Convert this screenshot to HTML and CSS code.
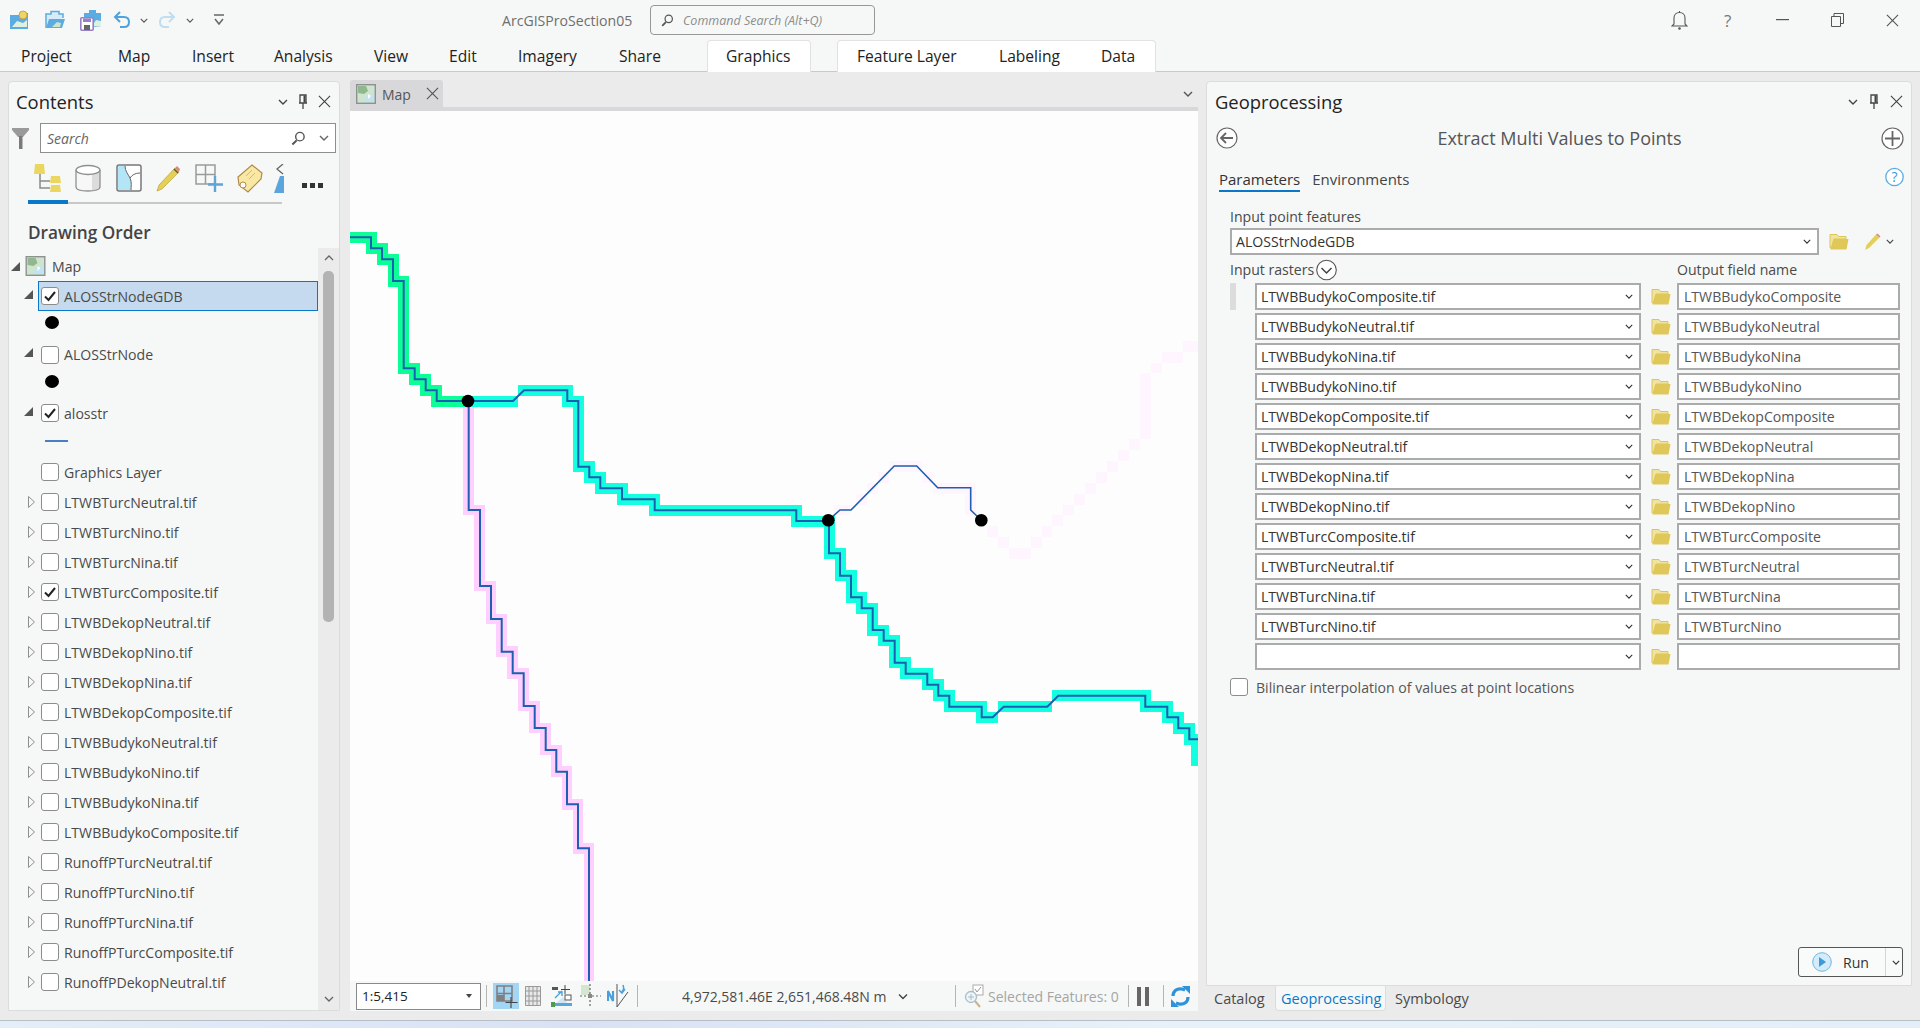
FILE: index.html
```html
<!DOCTYPE html>
<html lang="en">
<head>
  <meta charset="UTF-8" />
  <title>ArcGISProSection05</title>
  <link rel="stylesheet" href="styles.css">
</head>
<body>

  <svg class="defs" width="0" height="0">
    <symbol id="chev" viewBox="0 0 10 6"><path d="M1 1l4 4 4-4" fill="none" stroke="currentColor" stroke-width="1.4"/></symbol>
    <symbol id="closex" viewBox="0 0 14 14"><path d="M1 1l12 12M13 1L1 13" fill="none" stroke="currentColor" stroke-width="1.2"/></symbol>
    <symbol id="pin" viewBox="0 0 10 16"><path d="M2 1h6v8H2zM1 9h8M5 9v6" fill="none" stroke="currentColor" stroke-width="1.3"/><path d="M5.5 1.5h2v7h-2z" fill="currentColor"/></symbol>
    <symbol id="folder" viewBox="0 0 20 17"><path d="M1 3V1.5h7L9.5 3.5H17V6H5L2.5 15 1 15z" fill="#f1e3a0" stroke="#dcc659" stroke-width="1"/><path d="M4.5 6H19.5L17.5 16.5H1.500z" fill="#dfc859"/></symbol>
    <symbol id="check" viewBox="0 0 14 14"><path d="M2 7.5l3.500 3.500L12 3" fill="none" stroke="#222" stroke-width="2"/></symbol>
    <symbol id="tri-open" viewBox="0 0 9 9"><path d="M9 0v9H0z" fill="#555"/></symbol>
    <symbol id="tri-closed" viewBox="0 0 7 12"><path d="M.5.5l6 5.500-6 5.500z" fill="#f6f8f7" stroke="#8f8f8f"/></symbol>
    <symbol id="mapicon" viewBox="0 0 20 20"><rect x=".7" y=".7" width="18.6" height="18.6" fill="#cfe4cf" stroke="#8d9291" stroke-width="1.4"/><path d="M2 2h8l2 5-4 3-6-1z" fill="#8fb98d"/><path d="M18 9l-4 3-5 2-1 4h10z" fill="#bfe3f5"/><path d="M12 10l3 2-3 3z" fill="#fff"/></symbol>
    <symbol id="search" viewBox="0 0 16 16"><circle cx="9.5" cy="6" r="4.5" fill="none" stroke="#555" stroke-width="1.5"/><path d="M6 10l-4.5 4.5" stroke="#555" stroke-width="2.2"/></symbol>
  </svg>

  <header class="appbar">
    <div class="titlerow">
      <div class="qat">
        <svg width="20" height="20" viewBox="0 0 20 20"><path d="M0 5h10v-2h8v16H0z" fill="#5aace2"/><path d="M2 17l5-6 6 2 4-3v7z" fill="#dff0e0"/><circle cx="13" cy="5" r="4" fill="#efd469" stroke="#c9a83c"/></svg>
        <svg width="20" height="20" viewBox="0 0 20 20"><path d="M1 18V4h5V1.500h8V4h4v4" fill="#d7ecf8" stroke="#5aace2" stroke-width="1.5"/><path d="M4 9h16l-3 9H1z" fill="#5aace2"/><path d="M7 17l5-5 4 1-1 4z" fill="#cfe4c8"/></svg>
        <svg width="21" height="22" viewBox="0 0 21 22"><path d="M4 4h5V1h7v3h5v14H4z" fill="#5aace2"/><path d="M12 17l4-6 5 1v6z" fill="#dff0e0"/><rect x=".8" y="8.8" width="12.4" height="12.4" rx="1" fill="#fff" stroke="#9a80c4" stroke-width="1.6"/><rect x="3" y="9.5" width="8" height="3.5" fill="#9a80c4"/><rect x="4" y="16" width="6" height="5" fill="#666"/></svg>
        <svg width="18" height="18" viewBox="0 0 18 18"><path d="M7 1L2 6l5 5M2 6h9c3 0 5 2 5 5s-2 5-5 5H7" fill="none" stroke="#4ea3dc" stroke-width="2"/></svg>
        <svg class="tiny" width="8" height="5"><use href="#chev"/></svg>
        <svg width="18" height="18" viewBox="0 0 18 18"><path d="M11 1l5 5-5 5M16 6H7c-3 0-5 2-5 5s2 5 5 5h4" fill="none" stroke="#c0def2" stroke-width="2"/></svg>
        <svg class="tiny" width="8" height="5"><use href="#chev"/></svg>
        <svg width="10" height="12" viewBox="0 0 10 12"><path d="M0 1h10M1 5l4 5 4-5" fill="none" stroke="#666" stroke-width="1.5"/></svg>
      </div>
      <div class="doc-title">ArcGISProSection05</div>
      <div class="cmd-search">
        <svg width="13" height="13"><use href="#search"/></svg>
        <span>Command Search (Alt+Q)</span>
      </div>
      <div class="win-btns">
        <svg width="17" height="20" viewBox="0 0 17 20"><path d="M3 14V8c0-3 2-5.500 5.500-5.500S14 5 14 8v6l2 2H1zM8.500 1v1.500" fill="none" stroke="#555" stroke-width="1.1"/><circle cx="8.5" cy="18.5" r="1.3" fill="#555"/></svg>
        <span class="help">?</span>
        <svg width="13" height="2"><rect width="13" height="1.2" fill="#555"/></svg>
        <svg width="13" height="14" viewBox="0 0 13 14"><path d="M.5 3.500h9v10h-9zM3 3.500V.5h9.500v10H9.500" fill="none" stroke="#555"/></svg>
        <svg width="13" height="13" class="win-x"><use href="#closex"/></svg>
      </div>
    </div>
    <nav class="ribbon">
      <span class="rtab rtab-first">Project</span>
      <span class="rtab">Map</span>
      <span class="rtab">Insert</span>
      <span class="rtab">Analysis</span>
      <span class="rtab">View</span>
      <span class="rtab">Edit</span>
      <span class="rtab">Imagery</span>
      <span class="rtab">Share</span>
      <div class="ctx ctx-graphics"><span>Graphics</span></div>
      <div class="ctx ctx-layer"><span>Feature Layer</span><span>Labeling</span><span>Data</span></div>
    </nav>
  </header>

  <main class="workspace">

    <section class="contents">
      <div class="pane-head">
        <h2>Contents</h2>
        <div class="pane-tools">
          <svg width="10" height="6"><use href="#chev"/></svg>
          <svg width="10" height="16"><use href="#pin"/></svg>
          <svg width="13" height="13"><use href="#closex"/></svg>
        </div>
      </div>
      <div class="search-row">
        <svg width="17" height="21" viewBox="0 0 17 21"><path d="M0 0h17v2L11 9v0H6L0 2z" fill="#9a9a9a"/><rect x="7" y="8" width="3.5" height="13" fill="#7a7a7a"/></svg>
        <div class="search-box">
          <span>Search</span>
          <svg width="15" height="15"><use href="#search"/></svg>
          <svg class="search-chev" width="10" height="6"><use href="#chev"/></svg>
        </div>
      </div>
      <div class="view-icons">
        <svg width="28" height="28" viewBox="0 0 28 28"><path d="M6 10v14h10M6 17h10" fill="none" stroke="#8a8a8a" stroke-width="1.5"/><path d="M1 0h9l1 10H0z" fill="#ecd662"/><path d="M17 12h9l1 7H16zM17 21h9l1 7H16z" fill="#ecd662"/></svg>
        <svg width="26" height="28" viewBox="0 0 26 28"><path d="M17 5h8v18c0 2-4 4-8 4z" fill="#dcdcdc"/><ellipse cx="13" cy="6" rx="12" ry="4.5" fill="#fff" stroke="#8f8f8f" stroke-width="1.3"/><path d="M1 6v17c0 2.500 5 4 12 4s12-1.500 12-4V6" fill="none" stroke="#8f8f8f" stroke-width="1.3"/></svg>
        <svg width="26" height="28" viewBox="0 0 26 28"><rect x="1" y="1" width="24" height="26" rx="2" fill="#fff" stroke="#777" stroke-width="1.5"/><path d="M2 2h7c0 5 3 8 5 12s1 9 1 12H2z" fill="#b3e5f7"/><path d="M9 2c0 5 3 8 5 12s1 9 1 12M14 14c2-3 5-5 10-5" fill="none" stroke="#666" stroke-width="1"/></svg>
        <svg width="26" height="28" viewBox="0 0 26 28"><path d="M1 27l2-6L19 4l4 4L6 25z" fill="#e6cf55" stroke="#b9a23c" stroke-width=".7"/><path d="M19 4l2-2 3 3-1 3z" fill="#d98a7a"/><path d="M18 5l4 4" stroke="#555" stroke-width="1.5"/></svg>
        <svg width="28" height="28" viewBox="0 0 28 28"><path d="M1 1h19v19H1zM10.500 1v19M1 10.500h19" fill="none" stroke="#9a9a9a" stroke-width="1.5"/><path d="M20 12v16M13 20.500h15" stroke="#5fa4d4" stroke-width="2.4"/></svg>
        <svg width="27" height="30" viewBox="0 0 27 30"><path d="M16 1l10 8-1 6-13 13-9-7-1-8z" fill="#f8e8a4" stroke="#b08a4a" stroke-width="1.2"/><circle cx="7" cy="21" r="3" fill="#fff" stroke="#b08a4a"/><path d="M10 12l6-6M13 15l6-6" stroke="#d6bd5c"/></svg>
        <svg class="view-cut" width="10" height="29" viewBox="0 0 10 29"><path d="M9 0L3 5l6 5" fill="none" stroke="#666" stroke-width="1.3"/><path d="M6 12h4v17H0z" fill="#5aa6dc"/></svg>
        <span class="more"><i></i><i></i><i></i></span>
      </div>
      <div class="view-rule"><span></span></div>
      <h3>Drawing Order</h3>
      <div class="tree-wrap">
        <div class="tree">
          <div class="layer layer-root">
            <svg width="9" height="9"><use href="#tri-open"/></svg>
            <svg class="root-icon" width="21" height="20"><use href="#mapicon"/></svg>
            <span>Map</span>
          </div>
          <div class="layer">
            <div class="tw tw-open"><svg width="9" height="9"><use href="#tri-open"/></svg></div>
            <div class="lbody lbody-sel"><span class="cb"><svg width="14" height="14"><use href="#check"/></svg></span><span>ALOSStrNodeGDB</span></div>
          </div>
          <div class="sym"><i class="dot"></i></div>
          <div class="layer">
            <div class="tw tw-open"><svg width="9" height="9"><use href="#tri-open"/></svg></div>
            <div class="lbody"><span class="cb"></span><span>ALOSStrNode</span></div>
          </div>
          <div class="sym"><i class="dot"></i></div>
          <div class="layer">
            <div class="tw tw-open"><svg width="9" height="9"><use href="#tri-open"/></svg></div>
            <div class="lbody"><span class="cb"><svg width="14" height="14"><use href="#check"/></svg></span><span>alosstr</span></div>
          </div>
          <div class="sym sym-line"><i class="stroke"></i></div>
          <div class="layer">
            <div class="tw"></div>
            <div class="lbody"><span class="cb"></span><span>Graphics Layer</span></div>
          </div>
          <div class="layer"><div class="tw"><svg width="7" height="12"><use href="#tri-closed"/></svg></div><div class="lbody"><span class="cb"></span><span>LTWBTurcNeutral.tif</span></div></div>
          <div class="layer"><div class="tw"><svg width="7" height="12"><use href="#tri-closed"/></svg></div><div class="lbody"><span class="cb"></span><span>LTWBTurcNino.tif</span></div></div>
          <div class="layer"><div class="tw"><svg width="7" height="12"><use href="#tri-closed"/></svg></div><div class="lbody"><span class="cb"></span><span>LTWBTurcNina.tif</span></div></div>
          <div class="layer"><div class="tw"><svg width="7" height="12"><use href="#tri-closed"/></svg></div><div class="lbody"><span class="cb"><svg width="14" height="14"><use href="#check"/></svg></span><span>LTWBTurcComposite.tif</span></div></div>
          <div class="layer"><div class="tw"><svg width="7" height="12"><use href="#tri-closed"/></svg></div><div class="lbody"><span class="cb"></span><span>LTWBDekopNeutral.tif</span></div></div>
          <div class="layer"><div class="tw"><svg width="7" height="12"><use href="#tri-closed"/></svg></div><div class="lbody"><span class="cb"></span><span>LTWBDekopNino.tif</span></div></div>
          <div class="layer"><div class="tw"><svg width="7" height="12"><use href="#tri-closed"/></svg></div><div class="lbody"><span class="cb"></span><span>LTWBDekopNina.tif</span></div></div>
          <div class="layer"><div class="tw"><svg width="7" height="12"><use href="#tri-closed"/></svg></div><div class="lbody"><span class="cb"></span><span>LTWBDekopComposite.tif</span></div></div>
          <div class="layer"><div class="tw"><svg width="7" height="12"><use href="#tri-closed"/></svg></div><div class="lbody"><span class="cb"></span><span>LTWBBudykoNeutral.tif</span></div></div>
          <div class="layer"><div class="tw"><svg width="7" height="12"><use href="#tri-closed"/></svg></div><div class="lbody"><span class="cb"></span><span>LTWBBudykoNino.tif</span></div></div>
          <div class="layer"><div class="tw"><svg width="7" height="12"><use href="#tri-closed"/></svg></div><div class="lbody"><span class="cb"></span><span>LTWBBudykoNina.tif</span></div></div>
          <div class="layer"><div class="tw"><svg width="7" height="12"><use href="#tri-closed"/></svg></div><div class="lbody"><span class="cb"></span><span>LTWBBudykoComposite.tif</span></div></div>
          <div class="layer"><div class="tw"><svg width="7" height="12"><use href="#tri-closed"/></svg></div><div class="lbody"><span class="cb"></span><span>RunoffPTurcNeutral.tif</span></div></div>
          <div class="layer"><div class="tw"><svg width="7" height="12"><use href="#tri-closed"/></svg></div><div class="lbody"><span class="cb"></span><span>RunoffPTurcNino.tif</span></div></div>
          <div class="layer"><div class="tw"><svg width="7" height="12"><use href="#tri-closed"/></svg></div><div class="lbody"><span class="cb"></span><span>RunoffPTurcNina.tif</span></div></div>
          <div class="layer"><div class="tw"><svg width="7" height="12"><use href="#tri-closed"/></svg></div><div class="lbody"><span class="cb"></span><span>RunoffPTurcComposite.tif</span></div></div>
          <div class="layer"><div class="tw"><svg width="7" height="12"><use href="#tri-closed"/></svg></div><div class="lbody"><span class="cb"></span><span>RunoffPDekopNeutral.tif</span></div></div>
        </div>
        <div class="scrollbar">
          <svg class="sb-up" width="10" height="6" viewBox="0 0 10 6"><path d="M1 5l4-4 4 4" fill="none" stroke="#666" stroke-width="1.3"/></svg>
          <div class="thumb"></div>
          <svg class="sb-down" width="10" height="6"><use href="#chev"/></svg>
        </div>
      </div>
    </section>

    <section class="mapview">
      <div class="map-tabs">
        <div class="map-tab">
          <svg width="20" height="20"><use href="#mapicon"/></svg>
          <span>Map</span>
          <svg class="map-tab-x" width="13" height="13"><use href="#closex"/></svg>
        </div>
        <svg class="map-tabs-chev" width="10" height="6"><use href="#chev"/></svg>
      </div>
      <div class="map-canvas">
        <!-- coordinates are screen pixels, the viewBox starts at the corner of the map -->
        <svg class="map-svg" width="848" height="870" viewBox="350 111 848 870">
          <g class="faint">
            <rect x="834" y="505" width="16" height="10"/><rect x="856" y="494" width="11" height="11"/><rect x="867" y="483" width="11" height="11"/><rect x="878" y="472" width="11" height="11"/><rect x="889" y="461" width="33" height="11"/><rect x="922" y="472" width="11" height="11"/><rect x="933" y="483" width="43" height="11"/><rect x="965" y="494" width="11" height="21"/>
            <rect x="987" y="526" width="11" height="11"/><rect x="998" y="537" width="11" height="11"/><rect x="1009" y="548" width="22" height="11"/><rect x="1031" y="537" width="11" height="11"/><rect x="1042" y="526" width="10" height="11"/><rect x="1052" y="515" width="11" height="11"/><rect x="1063" y="505" width="11" height="10"/><rect x="1074" y="494" width="11" height="11"/><rect x="1085" y="483" width="11" height="11"/><rect x="1096" y="472" width="11" height="11"/><rect x="1107" y="461" width="11" height="11"/><rect x="1118" y="450" width="11" height="11"/><rect x="1129" y="439" width="11" height="11"/><rect x="1140" y="373" width="11" height="66"/><rect x="1151" y="363" width="11" height="10"/><rect x="1162" y="352" width="21" height="11"/><rect x="1183" y="341" width="15" height="11"/>
          </g>
          <path class="band band-pink" d="M468.7 401V510H479.7V586H491V619H501.7V651.7H512.7V673.3H523.7V706H534.7V728H545.7V750H556.3V771.7H567V804.3H578V848.3H589V981"/>
          <path class="band band-cyan" d="M462 401H518M518 390.3H567.3V401H578.3V466.7H589.3V477.3H600.3V488.3H622V499.3H654.7V510.3H796.3V521H829V553.3H840V575.7H851V597.3H861.7V608.3H872.7V630H883.7V640.7H894.7V662.7H905.7V673.7H927.3V684.7H938.3V695.7H949.3V706.7H981.7V717.3H998M998 706.7H1052M1052 695.7H1145.3V706.7H1167.3V717.3H1178.3V728.3H1189.3V739.3H1196V766"/>
          <path class="band band-green" d="M350 237.3H371V248.3H382V259.3H393V281H403.7V368.3H414.7V379.3H425.7V390.3H436.7V401H464"/>
          <path class="river" d="M350 237.3H371V248.3H382V259.3H393V281H403.7V368.3H414.7V379.3H425.7V390.3H436.7V401H513L524 390.3H567.3V401H578.3V466.7H589.3V477.3H600.3V488.3H622V499.3H654.7V510.3H796.3V521H829V553.3H840V575.7H851V597.3H861.7V608.3H872.7V630H883.7V640.7H894.7V662.7H905.7V673.7H927.3V684.7H938.3V695.7H949.3V706.7H981.7V717.3H992.7L1003.7 706.7H1047.3L1058.3 695.7H1145.3V706.7H1167.3V717.3H1178.3V728.3H1189.3V739.3H1198"/>
          <path class="river" d="M468.7 401V510H480V586H491V619H501.7V651.7H512.7V673.3H523.7V706H534.7V728H545.7V750H556.3V771.7H567V804.3H578V848.3H589V981"/>
          <path class="river river-thin" d="M828.3 520.3L840 510H851L894.3 466H916.7L937.7 487.7H970.7V510L981.3 520.3"/>
          <circle cx="468" cy="401" r="6.3"/>
          <circle cx="828.3" cy="520.3" r="6.3"/>
          <circle cx="981.3" cy="520.3" r="6.3"/>
        </svg>
      </div>
      <div class="statusbar">
        <div class="scale-box"><span>1:5,415</span><i class="caret"></i></div>
        <i class="sdiv sd1"></i>
        <div class="st-btn">
          <svg width="22" height="24" viewBox="0 0 22 24"><path d="M1 2h15v15H1zM8 2v15M1 9.500h15" fill="none" stroke="#808080" stroke-width="1.6"/><rect x="1" y="11" width="7" height="6" fill="#808080"/><path d="M15 13v11M9.500 18.500h12" stroke="#444" stroke-width="1.1"/></svg>
        </div>
        <svg class="st-grid" width="16" height="20" viewBox="0 0 16 20"><path d="M.5.5h15v19H.5zM.5 5h15M.5 10h15M.5 15h15M4 .5v19M8 .5v19M12 .5v19" fill="#e8e8e8" stroke="#999"/></svg>
        <svg class="st-snap" width="21" height="22" viewBox="0 0 21 22"><rect x="1" y="2" width="6" height="3" fill="#555"/><path d="M14 0v9M10 4.500h9" stroke="#444"/><path d="M4 13l7-7M7 7h4v4" fill="none" stroke="#4aa0dc" stroke-width="1.4"/><path d="M4 19l8-7 5 7z" fill="#cfe6f5"/><rect x="14" y="10" width="6" height="5" fill="#fff" stroke="#555"/><rect y="18" width="21" height="3" fill="#5aa6dc"/><rect y="17" width="4" height="5" fill="#4f9a4f"/></svg>
        <svg class="st-guide" width="21" height="24" viewBox="0 0 21 24"><rect x="1" y="1" width="9" height="10" fill="#d4e6d0"/><path d="M10 0v24M0 12h21" stroke="#666" stroke-width="1.2" stroke-dasharray="2 2"/><rect x="8" y="10" width="4" height="4" fill="#888"/></svg>
        <svg class="st-north" width="22" height="24" viewBox="0 0 22 24"><path d="M10 23L21 8M10 0v23" fill="none" stroke="#555"/><path d="M1 17V7l5 10V7" fill="none" stroke="#4aa0dc" stroke-width="2.2"/><path d="M16 1c1 3 1 4-1 7M12 6l3 3 3-4" fill="none" stroke="#4aa0dc" stroke-width="1.5"/></svg>
        <i class="sdiv sd2"></i>
        <span class="coords">4,972,581.46E 2,651,468.48N m</span>
        <svg class="st-chev" width="10" height="7"><use href="#chev"/></svg>
        <i class="sdiv sd3"></i>
        <svg class="st-sel" width="20" height="24" viewBox="0 0 20 24"><rect x="9" y="1" width="10" height="10" fill="#fff" stroke="#aaa"/><path d="M11 5l2 3 4-5" fill="none" stroke="#999"/><circle cx="7" cy="13" r="5.5" fill="#eef5fa" stroke="#a9bcc8" stroke-width="1.3"/><path d="M7 10v6M4 13h6" stroke="#a9bcc8"/><path d="M11 17l5 6" stroke="#c9b48c" stroke-width="2"/></svg>
        <span class="selected">Selected Features: 0</span>
        <i class="sdiv sd4"></i>
        <span class="pause"><i></i><i></i></span>
        <i class="sdiv sd5"></i>
        <svg class="st-refresh" width="19" height="21" viewBox="0 0 19 21"><path d="M2 10C2 5 6 2 11 3l3 1M17 11c0 5-4 8-9 7l-3-1" fill="none" stroke="#2e93d9" stroke-width="3.2"/><path d="M11 0h8v8zM8 21H0v-8z" fill="#2e93d9"/></svg>
      </div>
    </section>

    <section class="gp-col">
      <div class="gp">
        <div class="pane-head gp-head">
          <h2>Geoprocessing</h2>
          <div class="pane-tools gp-tools">
            <svg width="10" height="6"><use href="#chev"/></svg>
            <svg width="10" height="16"><use href="#pin"/></svg>
            <svg width="13" height="13"><use href="#closex"/></svg>
          </div>
        </div>
        <div class="gp-tool-row">
          <svg width="22" height="22" viewBox="0 0 22 22"><circle cx="11" cy="11" r="10" fill="#fff" stroke="#666" stroke-width="1.2"/><path d="M17 11H6M10 6l-5 5 5 5" fill="none" stroke="#666" stroke-width="1.8"/></svg>
          <div class="gp-tool-name">Extract Multi Values to Points</div>
          <svg width="23" height="23" viewBox="0 0 23 23"><circle cx="11.5" cy="11.5" r="10.5" fill="#fff" stroke="#666" stroke-width="1.2"/><path d="M11.500 4v15M4 11.500h15" stroke="#666" stroke-width="1.8"/></svg>
        </div>
        <div class="gp-tabs">
          <span class="gp-tab gp-tab-on">Parameters</span>
          <span class="gp-tab">Environments</span>
          <svg class="gp-help" width="19" height="20" viewBox="0 0 19 20"><circle cx="9.5" cy="10" r="8.7" fill="#fff" stroke="#5aace2" stroke-width="1.3"/><text x="9.5" y="15" text-anchor="middle" class="help-q">?</text></svg>
        </div>
        <div class="gp-form">
          <label class="field-label field-label-top">Input point features</label>
          <div class="point-row">
            <div class="combo combo-wide"><span>ALOSStrNodeGDB</span><svg width="8" height="5"><use href="#chev"/></svg></div>
            <svg class="folder" width="20" height="17"><use href="#folder"/></svg>
            <svg class="pencil" width="17" height="18" viewBox="0 0 17 18"><path d="M1 17l1.500-5L12 1.500l3.500 3L5 15z" fill="#e6cf55"/><path d="M12 1.500l1.500-1 3 3-1 1z" fill="#d98a7a"/></svg>
            <svg class="pencil-chev" width="8" height="5"><use href="#chev"/></svg>
          </div>
          <div class="raster-head">
            <span class="field-label rh-left">Input rasters</span>
            <svg class="rh-circle" width="21" height="22" viewBox="0 0 21 22"><circle cx="10.5" cy="11" r="9.8" fill="#fff" stroke="#555" stroke-width="1.1"/><path d="M5.500 9l5 5 5-5" fill="none" stroke="#444" stroke-width="1.5"/></svg>
            <span class="field-label rh-right">Output field name</span>
          </div>
          <div class="raster-row raster-first"><i class="handle"></i><div class="combo"><span>LTWBBudykoComposite.tif</span><svg width="8" height="5"><use href="#chev"/></svg></div><svg class="folder" width="20" height="17"><use href="#folder"/></svg><div class="textbox">LTWBBudykoComposite</div></div>
          <div class="raster-row"><i></i><div class="combo"><span>LTWBBudykoNeutral.tif</span><svg width="8" height="5"><use href="#chev"/></svg></div><svg class="folder" width="20" height="17"><use href="#folder"/></svg><div class="textbox">LTWBBudykoNeutral</div></div>
          <div class="raster-row"><i></i><div class="combo"><span>LTWBBudykoNina.tif</span><svg width="8" height="5"><use href="#chev"/></svg></div><svg class="folder" width="20" height="17"><use href="#folder"/></svg><div class="textbox">LTWBBudykoNina</div></div>
          <div class="raster-row"><i></i><div class="combo"><span>LTWBBudykoNino.tif</span><svg width="8" height="5"><use href="#chev"/></svg></div><svg class="folder" width="20" height="17"><use href="#folder"/></svg><div class="textbox">LTWBBudykoNino</div></div>
          <div class="raster-row"><i></i><div class="combo"><span>LTWBDekopComposite.tif</span><svg width="8" height="5"><use href="#chev"/></svg></div><svg class="folder" width="20" height="17"><use href="#folder"/></svg><div class="textbox">LTWBDekopComposite</div></div>
          <div class="raster-row"><i></i><div class="combo"><span>LTWBDekopNeutral.tif</span><svg width="8" height="5"><use href="#chev"/></svg></div><svg class="folder" width="20" height="17"><use href="#folder"/></svg><div class="textbox">LTWBDekopNeutral</div></div>
          <div class="raster-row"><i></i><div class="combo"><span>LTWBDekopNina.tif</span><svg width="8" height="5"><use href="#chev"/></svg></div><svg class="folder" width="20" height="17"><use href="#folder"/></svg><div class="textbox">LTWBDekopNina</div></div>
          <div class="raster-row"><i></i><div class="combo"><span>LTWBDekopNino.tif</span><svg width="8" height="5"><use href="#chev"/></svg></div><svg class="folder" width="20" height="17"><use href="#folder"/></svg><div class="textbox">LTWBDekopNino</div></div>
          <div class="raster-row"><i></i><div class="combo"><span>LTWBTurcComposite.tif</span><svg width="8" height="5"><use href="#chev"/></svg></div><svg class="folder" width="20" height="17"><use href="#folder"/></svg><div class="textbox">LTWBTurcComposite</div></div>
          <div class="raster-row"><i></i><div class="combo"><span>LTWBTurcNeutral.tif</span><svg width="8" height="5"><use href="#chev"/></svg></div><svg class="folder" width="20" height="17"><use href="#folder"/></svg><div class="textbox">LTWBTurcNeutral</div></div>
          <div class="raster-row"><i></i><div class="combo"><span>LTWBTurcNina.tif</span><svg width="8" height="5"><use href="#chev"/></svg></div><svg class="folder" width="20" height="17"><use href="#folder"/></svg><div class="textbox">LTWBTurcNina</div></div>
          <div class="raster-row"><i></i><div class="combo"><span>LTWBTurcNino.tif</span><svg width="8" height="5"><use href="#chev"/></svg></div><svg class="folder" width="20" height="17"><use href="#folder"/></svg><div class="textbox">LTWBTurcNino</div></div>
          <div class="raster-row"><i></i><div class="combo"><span></span><svg width="8" height="5"><use href="#chev"/></svg></div><svg class="folder" width="20" height="17"><use href="#folder"/></svg><div class="textbox"></div></div>
          <div class="bilinear"><span class="cb"></span><span>Bilinear interpolation of values at point locations</span></div>
        </div>
        <div class="run-row">
          <div class="run-btn">
            <svg width="20" height="20" viewBox="0 0 20 20"><circle cx="10" cy="10" r="9.3" fill="#d4ebf9" stroke="#6db6e6" stroke-width="1"/><path d="M7 5l7 5-7 5z" fill="#3b9ad9"/></svg>
            <span class="run-label">Run</span>
            <span class="run-split"><svg width="8" height="5"><use href="#chev"/></svg></span>
          </div>
        </div>
      </div>
      <div class="dock-tabs">
        <span class="dock-tab dock-catalog">Catalog</span>
        <span class="dock-tab dock-tab-on">Geoprocessing</span>
        <span class="dock-tab">Symbology</span>
      </div>
    </section>

  </main>

  <div class="desktop-strip"></div>

</body>
</html>
```

FILE: styles.css
```css
* {
  box-sizing: border-box;
}

body {
  margin: 0;
  width: 1920px;
  height: 1028px;
  overflow: hidden;
  background-color: #ebebeb;
  font-family: "Open Sans", "Noto Sans", Arial, sans-serif;
  font-size: 14.1px;
  color: #4a4a4a;
}

i {
  display: block;
}

svg {
  display: block;
  flex: none;
}

.defs {
  position: absolute;
}

/* top bar */
.appbar {
  height: 72px;
  background-color: #f6f8f7;
  border-bottom: 1px solid #c9c9c9;
}

.titlerow {
  height: 40px;
  display: flex;
  align-items: center;
}

.qat {
  width: 502px;
  padding-left: 10px;
  display: grid;
  grid-template-columns: 35px 35px 33px 27px 18px 28px 28px 20px;
  align-items: center;
  color: #555;
}

.doc-title {
  width: 148px;
  color: #6e6e6e;
}

.cmd-search {
  width: 225px;
  height: 30px;
  padding-left: 10px;
  display: flex;
  align-items: center;
  gap: 9px;
  border: 1px solid #979797;
  border-radius: 4px;
  font-style: italic;
  font-size: 12.5px;
  color: #8c8c8c;
}

.win-btns {
  margin-left: auto;
  width: 249px;
  display: grid;
  grid-template-columns: 50px 55px 55px 55px 34px;
  align-items: center;
  color: #555;
}

.help {
  font-size: 17px;
  color: #777;
  padding-left: 3px;
}

.ribbon {
  height: 31px;
  display: grid;
  grid-template-columns: 118px 74px 82px 100px 75px 69px 101px 88px 104px 26px 319px;
  font-size: 15.6px;
  color: #222;
}

.rtab {
  line-height: 32px;
}

.rtab-first {
  padding-left: 21px;
}

.ctx {
  background: #fff;
  border: 1px solid #e2e2e2;
  border-bottom: none;
  border-radius: 4px 4px 0 0;
  line-height: 30px;
  padding-left: 18px;
}

.ctx-layer {
  grid-column: 11;
  display: flex;
  padding-left: 19px;
}

.ctx-layer span:nth-child(1) {
  width: 142px;
}

.ctx-layer span:nth-child(2) {
  width: 102px;
}

/* three columns */
.workspace {
  height: 948px;
  display: flex;
  padding: 8px 8px 9px 8px;
}

.pane-head {
  height: 41px;
  padding: 0 8px 2px 7px;
  display: flex;
  align-items: center;
  justify-content: space-between;
}

.pane-head h2 {
  margin: 0;
  font-weight: 400;
  font-size: 18.4px;
  color: #222;
}

.pane-tools {
  display: flex;
  align-items: center;
  gap: 10px;
  color: #444;
}

/* contents pane */
.contents {
  width: 332px;
  margin-top: 1px;
  background-color: #f6f8f7;
  border: 1px solid #dcdcdc;
  border-radius: 4px 4px 0 0;
  display: flex;
  flex-direction: column;
  overflow: hidden;
}

.search-row {
  height: 30px;
  display: flex;
  align-items: center;
  gap: 11px;
  padding-left: 3px;
}

.search-box {
  width: 296px;
  height: 30px;
  background: #fff;
  border: 1px solid #8e8e8e;
  padding: 0 6px;
  display: flex;
  align-items: center;
  font-style: italic;
  font-size: 14px;
  color: #666;
}

.search-box span {
  flex: 1;
}

.search-chev {
  margin-left: 13px;
  color: #666;
}

.view-icons {
  height: 39px;
  padding: 11px 0 0 25px;
  display: flex;
  align-items: flex-start;
}

.view-icons svg:nth-child(2) {
  margin-left: 13px;
}

.view-icons svg:nth-child(3) {
  margin-left: 15px;
}

.view-icons svg:nth-child(4) {
  margin-left: 14px;
}

.view-icons svg:nth-child(5) {
  margin-left: 13px;
}

.view-icons svg:nth-child(6) {
  margin-left: 13px;
}

.view-cut {
  margin-left: 11px;
}

.more {
  margin: 19px 0 0 18px;
  display: flex;
  gap: 3px;
}

.more i {
  width: 5px;
  height: 5px;
  background: #333;
}

.view-rule {
  margin: 10px 0 0 19px;
  width: 254px;
  height: 2px;
  background: #c8c8c8;
}

.view-rule span {
  display: block;
  width: 40px;
  height: 4px;
  background: #0a78c8;
  transform: translateY(-2px);
}

.contents h3 {
  margin: 18px 0 0 19px;
  height: 26px;
  font-size: 17.2px;
  font-weight: 600;
  line-height: 22px;
  color: #444;
}

.tree-wrap {
  flex: 1;
  display: flex;
  min-height: 0;
}

.tree {
  width: 310px;
  padding-top: 3px;
  overflow: hidden;
}

.layer {
  height: 30px;
  display: flex;
  align-items: stretch;
}

.layer-root {
  align-items: center;
  padding-left: 2px;
}

.root-icon {
  margin-left: 5px;
}

.layer-root span {
  margin-left: 6px;
}

.tw {
  width: 29px;
  display: flex;
  align-items: center;
  justify-content: flex-end;
  padding-right: 3px;
}

.tw-open {
  padding-right: 5px;
  padding-bottom: 4px;
}

.lbody {
  width: 280px;
  padding-left: 2px;
  display: flex;
  align-items: center;
  gap: 5px;
  border: 1px solid transparent;
}

.lbody-sel {
  background-color: #c5daee;
  border-color: #0a78c8;
}

.cb {
  width: 18px;
  height: 18px;
  background: #fff;
  border: 1px solid #8c8c8c;
  border-radius: 3px;
  display: flex;
  align-items: center;
  justify-content: center;
  flex: none;
}

.sym {
  height: 28.5px;
  padding: 5px 0 0 36px;
}

.sym-line {
  height: 29px;
  padding: 12px 0 0 36px;
}

.dot {
  width: 14px;
  height: 13px;
  border-radius: 50%;
  background: #000;
}

.stroke {
  width: 23px;
  height: 2px;
  background: #4a7fc8;
}

.scrollbar {
  width: 21px;
  background-color: #ebebeb;
  display: flex;
  flex-direction: column;
  align-items: center;
}

.sb-up {
  margin-top: 7px;
}

.thumb {
  width: 11px;
  height: 351px;
  margin-top: 10px;
  border-radius: 5px;
  background: #b3b3b3;
}

.sb-down {
  margin-top: auto;
  margin-bottom: 8px;
  color: #666;
}

/* map */
.mapview {
  width: 848px;
  margin: 0 8px 0 10px;
  display: flex;
  flex-direction: column;
}

.map-tabs {
  height: 31px;
  display: flex;
  align-items: flex-start;
  justify-content: space-between;
  border-bottom: 4px solid #d8d8da;
  color: #555;
}

.map-tab {
  width: 93px;
  height: 27px;
  background-color: #d8d8da;
  border-radius: 3px 3px 0 0;
  padding-left: 6px;
  display: flex;
  align-items: center;
  gap: 6px;
  color: #555;
  font-size: 14px;
}

.map-tab span {
  margin-top: 2px;
}

.map-tab-x {
  margin-left: 9px;
}

.map-tabs-chev {
  margin: 11px 5px 0 0;
}

.map-canvas {
  height: 870px;
  background-color: #fdfdfd;
}

.faint rect {
  fill: #fef5fe;
}

.band {
  fill: none;
  stroke-width: 11;
  shape-rendering: crispEdges;
}

.band-pink {
  stroke: #ffcfff;
  stroke-width: 10.5;
}

.band-cyan {
  stroke: #14ffdf;
}

.band-green {
  stroke: #0cff96;
}

.river {
  fill: none;
  stroke: #1d5fb0;
  stroke-width: 2;
}

.river-thin {
  stroke-width: 1.6;
}

.statusbar {
  height: 30px;
  background-color: #f6f8f7;
  display: flex;
  align-items: center;
  font-size: 14px;
}

.scale-box {
  width: 125px;
  height: 27px;
  margin-left: 6px;
  background: #fff;
  border: 1px solid #8a8a8a;
  padding: 0 8px 0 5px;
  display: flex;
  align-items: center;
  justify-content: space-between;
  font-size: 13.5px;
  color: #222;
}

.caret {
  width: 0;
  height: 0;
  border-left: 3.5px solid transparent;
  border-right: 3.5px solid transparent;
  border-top: 4px solid #444;
}

.sdiv {
  width: 1px;
  height: 22px;
  background: #b5b5b5;
}

.sd1 {
  margin-left: 5px;
}

.st-btn {
  width: 26px;
  height: 26px;
  margin-left: 6px;
  padding: 1px 0 0 3px;
  background: #a3d5f5;
}

.st-grid {
  margin-left: 6px;
}

.st-snap {
  margin-left: 10px;
}

.st-guide {
  margin-left: 8px;
}

.st-north {
  margin-left: 6px;
}

.sd2 {
  margin-left: 8px;
}

.coords {
  width: 202px;
  margin-left: 44px;
  white-space: nowrap;
}

.st-chev {
  margin-left: 14px;
  color: #444;
}

.sd3 {
  margin-left: 47px;
}

.st-sel {
  margin-left: 8px;
}

.selected {
  width: 131px;
  margin-left: 4px;
  white-space: nowrap;
  color: #a5a5a5;
}

.sd4 {
  margin-left: 9px;
}

.pause {
  margin-left: 8px;
  display: flex;
  gap: 4px;
}

.pause i {
  width: 4px;
  height: 19px;
  background: #666;
}

.sd5 {
  margin-left: 14px;
}

.st-refresh {
  margin-left: 7px;
}

/* geoprocessing */
.gp-col {
  width: 706px;
  display: flex;
  flex-direction: column;
}

.gp {
  height: 905px;
  margin-top: 1px;
  background-color: #f6f8f7;
  border: 1px solid #dcdcdc;
  border-radius: 4px 4px 0 0;
  display: flex;
  flex-direction: column;
}

.gp-head {
  padding-left: 8px;
}

.gp-tools {
  gap: 11px;
}

.gp-tool-row {
  height: 28px;
  margin-top: 1px;
  padding: 0 7px 0 9px;
  display: flex;
  align-items: center;
}

.gp-tool-name {
  flex: 1;
  text-align: center;
  font-size: 18px;
  color: #555;
}

.gp-tabs {
  height: 43px;
  margin-top: 12px;
  padding: 0 7px 0 12px;
  display: flex;
  align-items: flex-start;
  gap: 12px;
  font-size: 15px;
}

.gp-tab {
  height: 28px;
  padding-top: 5px;
  color: #444;
}

.gp-tab-on {
  border-bottom: 2px solid #0a78c8;
  color: #333;
}

.gp-help {
  margin: 3px 0 0 auto;
}

.help-q {
  font-size: 14px;
  fill: #3b9ad9;
}

.gp-form {
  padding-left: 23px;
}

.field-label {
  display: block;
  height: 20px;
  line-height: 20px;
  white-space: nowrap;
}

.field-label-top {
  height: 21px;
}

.point-row {
  display: flex;
  align-items: center;
  height: 27px;
}

.combo {
  height: 27px;
  background: #fff;
  border: 2px solid #ababab;
  padding: 0 6px 0 4px;
  display: flex;
  align-items: center;
  justify-content: space-between;
  color: #333;
}

.combo-wide {
  width: 589px;
}

.point-row .folder {
  margin-left: 10px;
}

.pencil {
  margin-left: 15px;
}

.pencil-chev {
  margin-left: 5px;
  color: #444;
}

.raster-head {
  height: 28px;
  padding-top: 2px;
  display: flex;
  align-items: center;
}

.rh-circle {
  margin: 0 0 0 4px;
}

.rh-left {
  width: 82px;
}

.rh-right {
  margin-left: 340px;
}

.raster-row {
  display: grid;
  grid-template-columns: 25px 386px 36px 223px;
  align-items: center;
  height: 27px;
  margin-bottom: 3px;
}

.handle {
  width: 6px;
  height: 27px;
  background: #dcdcdc;
}

.raster-row .folder {
  margin-left: 10px;
}

.textbox {
  height: 27px;
  background: #fff;
  border: 2px solid #ababab;
  padding-left: 5px;
  line-height: 23px;
  color: #555;
}

.bilinear {
  margin-top: 7px;
  display: flex;
  align-items: center;
  gap: 8px;
  height: 20px;
  color: #555;
}

.run-row {
  margin-top: auto;
  height: 38px;
  padding-right: 8px;
  display: flex;
  justify-content: flex-end;
}

.run-btn {
  width: 105px;
  height: 30px;
  background: #f9fbfa;
  border: 1px solid #555;
  border-radius: 3px;
  display: flex;
  align-items: center;
  padding-left: 13px;
}

.run-label {
  width: 53px;
  padding-left: 11px;
  color: #333;
}

.run-split {
  height: 28px;
  border-left: 1px solid #d4d4d4;
  flex: 1;
  display: flex;
  align-items: center;
  padding-left: 6px;
  color: #333;
}

.dock-tabs {
  height: 25px;
  display: flex;
  align-items: center;
  font-size: 14.5px;
}

.dock-tab {
  height: 25px;
  line-height: 26px;
  padding-left: 9px;
}

.dock-catalog {
  width: 69px;
  padding-left: 8px;
}

.dock-tab-on {
  width: 111px;
  background: #f6f8f7;
  border: 1px solid #dcdcdc;
  border-top: none;
  border-radius: 0 0 4px 4px;
  padding-left: 5px;
  color: #0a78c8;
}

.desktop-strip {
  height: 8px;
  border-top: 1px solid #b7bec6;
  background: linear-gradient(90deg, #e4eef9, #d8e2f4 30%, #e6f1f9 60%, #e4eef8);
}
```
